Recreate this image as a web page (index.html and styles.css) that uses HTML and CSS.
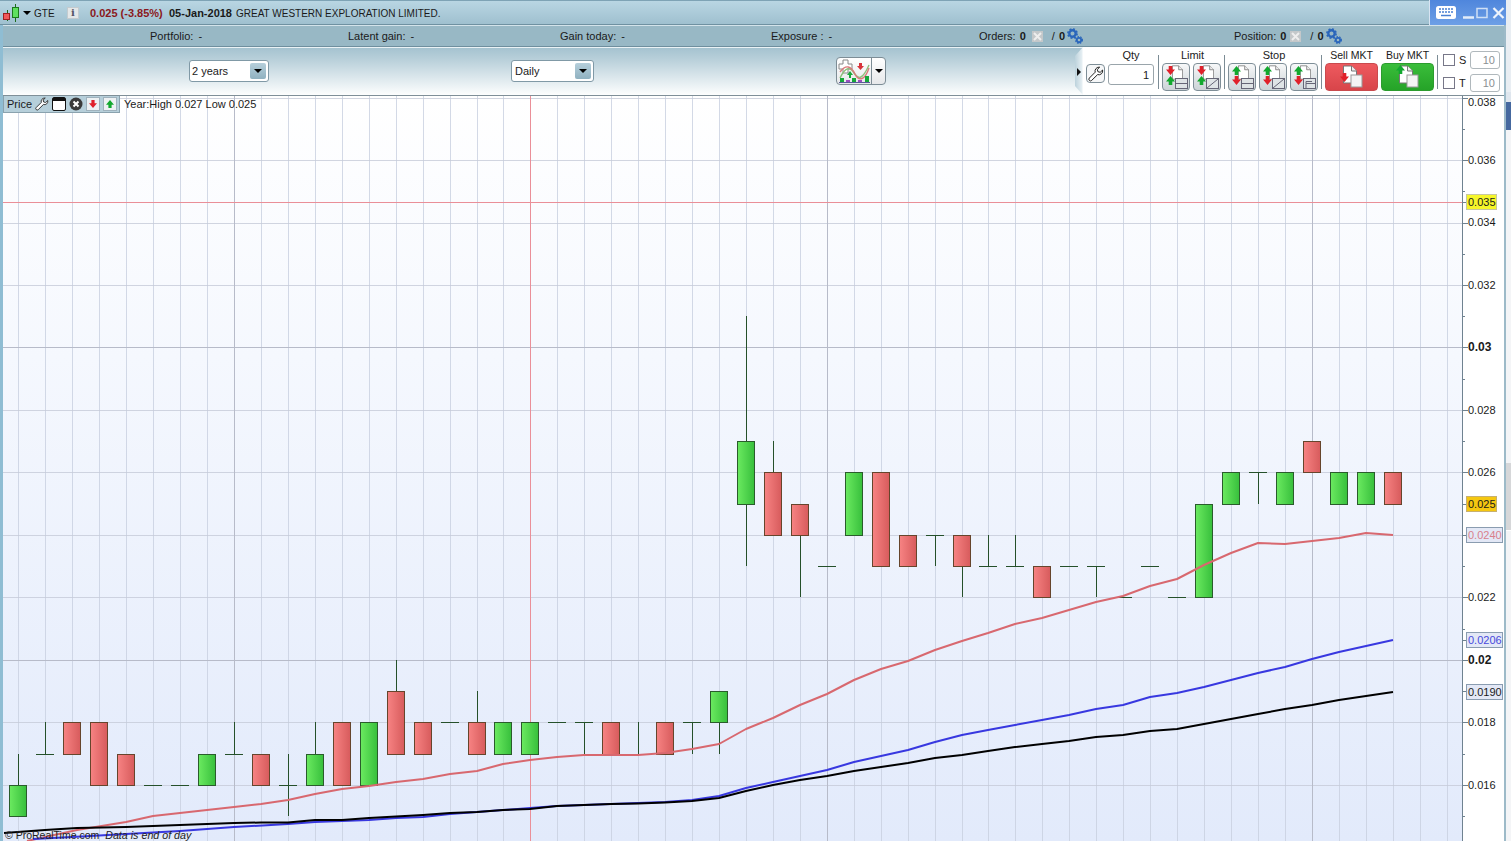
FILE: index.html
```html
<!DOCTYPE html>
<html lang="en">
<head>
<meta charset="utf-8">
<title>GTE</title>
<link rel="stylesheet" href="styles.css">
</head>
<body>
<svg class="defs" width="0" height="0" aria-hidden="true">
  <defs>
    <linearGradient id="gGreen" x1="0" x2="1" y1="0" y2="0"><stop offset="0" stop-color="#6bea60"/><stop offset="1" stop-color="#37bf3c"/></linearGradient>
    <linearGradient id="gRed" x1="0" x2="1" y1="0" y2="0"><stop offset="0" stop-color="#f78383"/><stop offset="1" stop-color="#d75b5c"/></linearGradient>
    <symbol id="aDown" viewBox="0 0 10 10"><path d="M3 0h4v4h3l-5 6-5-6h3z" fill="#e0202a"/></symbol>
    <symbol id="aUp" viewBox="0 0 10 10"><path d="M5 0l5 6h-3v4h-4v-4h-3z" fill="#12a82e"/></symbol>
    <symbol id="paper" viewBox="0 0 14 18"><path d="M.5.5h8l5 5v12h-13z" fill="#fff" stroke="#777"/><path d="M8.500.5v5h5" fill="#eee" stroke="#777"/></symbol>
    <symbol id="gear" viewBox="0 0 16 16">
      <circle cx="5.500" cy="5.500" r="3.200" fill="none" stroke="#2a66bb" stroke-width="2.400"/>
      <circle cx="5.500" cy="5.500" r="4.600" fill="none" stroke="#2a66bb" stroke-width="1.600" stroke-dasharray="2 1.600"/>
      <circle cx="12" cy="12" r="2.200" fill="none" stroke="#2a66bb" stroke-width="1.800"/>
      <circle cx="12" cy="12" r="3.400" fill="none" stroke="#2a66bb" stroke-width="1.200" stroke-dasharray="1.600 1.200"/>
    </symbol>
    <symbol id="wrench" viewBox="0 0 16 16"><path d="M11 1.200a3.900 3.900 0 0 0-3.800 5L1.400 12a1.600 1.600 0 0 0 2.300 2.400l5.900-5.800a3.900 3.900 0 0 0 5-4.600l-2.400 2.300-2.300-.6-.6-2.300 2.400-2.200a3.900 3.900 0 0 0-.7 0z" fill="#fff" stroke="#222" stroke-width="1"/></symbol>
    <symbol id="xmark" viewBox="0 0 11 11"><rect width="11" height="11" fill="#c4c8ca"/><path d="M2 2l7 7M9 2l-7 7" stroke="#eee" stroke-width="2"/></symbol>
  </defs>
</svg>

<div class="screen">
  <div class="window">
    <header class="titlebar">
      <svg class="logo" width="16" height="18" viewBox="0 0 16 18">
        <path d="M12.500 0v18M4.500 6v11" stroke="#1c6b1c"/>
        <rect x="9.500" y="3.500" width="6" height="10" fill="#5fe05f" stroke="#1c7a1c"/>
        <rect x=".5" y="9.500" width="6" height="6" fill="#f05a5a" stroke="#a02020"/>
      </svg>
      <span class="caret caret-title"></span>
      <span class="ticker">GTE</span>
      <span class="info-btn">i</span>
      <span class="price">0.025 (-3.85%)</span>
      <span class="date">05-Jan-2018</span>
      <span class="company">GREAT WESTERN EXPLORATION LIMITED.</span>
      <div class="winctl">
        <svg width="20" height="13" viewBox="0 0 20 13">
          <rect width="20" height="13" rx="2.500" fill="#fff"/>
          <path d="M3 3h2M6 3h2M9 3h2M12 3h2M15 3h2M3 6h2M6 6h2M9 6h2M12 6h2M15 6h2M5 9.500h10" stroke="#4a80d2" stroke-width="1.600"/>
        </svg>
        <svg class="ctl-min" width="11" height="12" viewBox="0 0 11 12"><path d="M0 10.500h11" stroke="#e3edf9" stroke-width="2.500"/></svg>
        <svg class="ctl-max" width="12" height="12" viewBox="0 0 12 12"><rect x="1" y="1.500" width="10" height="9" fill="none" stroke="#cfe0f5" stroke-width="1.500"/></svg>
        <svg class="ctl-close" width="13" height="12" viewBox="0 0 13 12"><path d="M1.500 1l10 10M11.500 1l-10 10" stroke="#eef4fc" stroke-width="2.200"/></svg>
      </div>
    </header>

    <div class="body">
      <div class="statusbar">
        <span class="stat stat-portfolio">Portfolio:<span class="dash">-</span></span>
        <span class="stat stat-latent">Latent gain:<span class="dash">-</span></span>
        <span class="stat stat-gain">Gain today:<span class="dash">-</span></span>
        <span class="stat stat-exposure">Exposure :<span class="dash">-</span></span>
        <span class="stat stat-orders">Orders:<b class="zero">0</b>
          <svg class="ic-x" width="11" height="11"><use href="#xmark"/></svg>
          <span class="slash">/</span><b class="zero-b">0</b><svg class="ic-gear" width="16" height="16"><use href="#gear"/></svg>
        </span>
        <span class="stat stat-position">Position:<b class="zero">0</b>
          <svg class="ic-x" width="11" height="11"><use href="#xmark"/></svg>
          <span class="slash">/</span><b class="zero-b">0</b><svg class="ic-gear" width="16" height="16"><use href="#gear"/></svg>
        </span>
      </div>

      <div class="toolbar">
        <div class="select select-range"><span>2 years</span><span class="select-btn"><span class="caret"></span></span></div>
        <div class="select select-period"><span>Daily</span><span class="select-btn"><span class="caret"></span></span></div>
        <div class="indicator">
          <svg width="34" height="26" viewBox="0 0 34 26">
            <path d="M6 2h5v4h4v5h-4v4H6v-4H2V6h4z" fill="#fff" stroke="#888"/>
            <path d="M3 20C9 8 13 9 17 15s8 8 15-8" fill="none" stroke="#8cc07a" stroke-width="1.400"/>
            <path d="M3 14C9 6 14 8 18 16s10 6 14-6" fill="none" stroke="#d97a7a" stroke-width="1.400"/>
            <path d="M22 5h3v3h2l-3.500 4-3.500-4h2z" fill="#d8323a"/>
            <path d="M13 13l3 4h-2v3h-2v-3h-2z" fill="#1aa83a"/>
            <path d="M3 20h4v4H3zM15 20h4v4h-4zM28 18h4v6h-4z" fill="#16a83a"/>
            <path d="M9 22h4v2H9zM21 22h4v2h-4z" fill="#9b4fc0"/>
            <path d="M2 24.500h31" stroke="#5a5a9a"/>
          </svg>
          <span class="indicator-arrow"><span class="caret"></span></span>
        </div>

        <div class="panel">
          <span class="panel-arrow"></span>
          <button class="tool wrench-btn" type="button"><svg width="16" height="16"><use href="#wrench"/></svg></button>
          <div class="group group-qty">
            <div class="group-label">Qty</div>
            <div class="qty">1</div>
          </div>
          <div class="group group-limit">
            <div class="group-label">Limit</div>
            <div class="btns">
              <button class="tool" type="button">
                <svg width="26" height="26" viewBox="0 0 26 26">
                  <use href="#paper" x="9" y="1" width="11" height="15"/>
                  <use href="#aDown" x="3" y="2" width="9" height="9"/><use href="#aUp" x="3" y="12" width="9" height="9"/>
                  <rect x="12.500" y="14.500" width="12" height="10" fill="#dfe4e6" stroke="#667"/><path d="M12.500 19.500h12" stroke="#667"/>
                </svg>
              </button>
              <button class="tool" type="button">
                <svg width="26" height="26" viewBox="0 0 26 26">
                  <use href="#paper" x="9" y="1" width="11" height="15"/>
                  <use href="#aDown" x="3" y="2" width="9" height="9"/><use href="#aUp" x="3" y="12" width="9" height="9"/>
                  <rect x="12.500" y="14.500" width="12" height="10" fill="#dfe4e6" stroke="#667"/><path d="M13 24l11-9" stroke="#667"/>
                </svg>
              </button>
            </div>
          </div>
          <div class="group group-stop">
            <div class="group-label">Stop</div>
            <div class="btns">
              <button class="tool" type="button">
                <svg width="26" height="26" viewBox="0 0 26 26">
                  <use href="#paper" x="9" y="1" width="11" height="15"/>
                  <use href="#aUp" x="3" y="2" width="9" height="9"/><use href="#aDown" x="3" y="12" width="9" height="9"/>
                  <rect x="12.500" y="14.500" width="12" height="10" fill="#dfe4e6" stroke="#667"/><path d="M12.500 19.500h12" stroke="#667"/>
                </svg>
              </button>
              <button class="tool" type="button">
                <svg width="26" height="26" viewBox="0 0 26 26">
                  <use href="#paper" x="9" y="1" width="11" height="15"/>
                  <use href="#aUp" x="3" y="2" width="9" height="9"/><use href="#aDown" x="3" y="12" width="9" height="9"/>
                  <rect x="12.500" y="14.500" width="12" height="10" fill="#dfe4e6" stroke="#667"/><path d="M13 24l11-9" stroke="#667"/>
                </svg>
              </button>
              <button class="tool" type="button">
                <svg width="26" height="26" viewBox="0 0 26 26">
                  <use href="#paper" x="9" y="1" width="11" height="15"/>
                  <use href="#aUp" x="3" y="2" width="9" height="9"/><use href="#aDown" x="3" y="12" width="9" height="9"/>
                  <rect x="12.500" y="14.500" width="12" height="10" fill="#dfe4e6" stroke="#667"/><path d="M15 24.500v-5h9" fill="none" stroke="#667"/><path d="M15 19.500v-2h6" fill="none" stroke="#667"/>
                </svg>
              </button>
            </div>
          </div>
          <div class="group group-mkt">
            <div class="group-label">Sell MKT</div>
            <button class="mkt mkt-sell" type="button">
              <svg width="26" height="26" viewBox="0 0 26 26">
                <use href="#paper" x="4" y="1" width="14" height="19"/>
                <use href="#aDown" x="1" y="9" width="9" height="9"/>
                <rect x="12" y="11" width="11" height="12" fill="#f4f4f4" stroke="#999"/>
              </svg>
            </button>
          </div>
          <div class="group group-mkt group-buy">
            <div class="group-label">Buy MKT</div>
            <button class="mkt mkt-buy" type="button">
              <svg width="26" height="26" viewBox="0 0 26 26">
                <use href="#paper" x="4" y="1" width="14" height="19"/>
                <use href="#aUp" x="1" y="1" width="9" height="9"/>
                <rect x="12" y="11" width="11" height="12" fill="#f4f4f4" stroke="#999"/>
              </svg>
            </button>
          </div>
          <div class="group-st">
            <label class="st-row"><span class="check"></span><span class="st-name">S</span><span class="st-val">10</span></label>
            <label class="st-row"><span class="check"></span><span class="st-name">T</span><span class="st-val">10</span></label>
          </div>
        </div>
      </div>

      <div class="chart">
        <svg class="plot" width="1501" height="745" viewBox="3 96 1501 745">
          <rect class="axis-bg" x="1462" y="96" width="42" height="745"/>
          <path class="grid-v" d="M18.500 96V841M45.500 96V841M72.500 96V841M99.500 96V841M126.500 96V841M153.500 96V841M180.500 96V841M207.500 96V841M261.500 96V841M288.500 96V841M315.500 96V841M342.500 96V841M369.500 96V841M396.500 96V841M423.500 96V841M450.500 96V841M477.500 96V841M503.500 96V841M557.500 96V841M584.500 96V841M611.500 96V841M638.500 96V841M665.500 96V841M692.500 96V841M719.500 96V841M746.500 96V841M773.500 96V841M800.500 96V841M854.500 96V841M881.500 96V841M908.500 96V841M935.500 96V841M962.500 96V841M988.500 96V841M1015.500 96V841M1042.500 96V841M1069.500 96V841M1096.500 96V841M1123.500 96V841M1150.500 96V841M1177.500 96V841M1204.500 96V841M1231.500 96V841M1258.500 96V841M1285.500 96V841M1339.500 96V841M1366.500 96V841M1393.500 96V841M1420.500 96V841M1447.500 96V841"/>
          <path class="grid-h" d="M3 98.500H1462M3 160.500H1462M3 223.500H1462M3 285.500H1462M3 410.500H1462M3 472.500H1462M3 535.500H1462M3 597.500H1462M3 722.500H1462M3 785.500H1462"/>
          <path class="grid-major" d="M234.500 96V841M827.500 96V841M1312.500 96V841M3 347.500H1462M3 660.500H1462"/>
          <path class="cursor" d="M530.500 96V841M3 202.500H1462"/>

          <path class="wick" d="M18.500 754V785M45.500 722V754M234.500 722V754M288.500 754V816M315.500 722V754M396.500 660V691M477.500 691V722M584.500 722V754M638.500 722V754M692.500 722V754M719.500 722V754M746.500 316V441M746.500 504V566M773.500 441V472M800.500 535V597M935.500 535V566M962.500 566V597M988.500 535V566M1015.500 535V566M1096.500 566V597M1258.500 472V504"/>
          <path class="wick" d="M36 754.500H54M144 785.500H162M171 785.500H189M225 754.500H243M279 785.500H297M441 722.500H459M548 722.500H566M575 722.500H593M683 722.500H701M818 566.500H836M926 535.500H944M979 566.500H997M1006 566.500H1024M1060 566.500H1078M1087 566.500H1105M1114 597.500H1132M1141 566.500H1159M1168 597.500H1186M1249 472.500H1267"/>

          <g class="body-green" fill="url(#gGreen)">
            <rect x="9.500" y="785.500" width="17" height="31"/>
            <rect x="198.500" y="754.500" width="17" height="31"/>
            <rect x="306.500" y="754.500" width="17" height="31"/>
            <rect x="360.500" y="722.500" width="17" height="63"/>
            <rect x="494.500" y="722.500" width="17" height="32"/>
            <rect x="521.500" y="722.500" width="17" height="32"/>
            <rect x="710.500" y="691.500" width="17" height="31"/>
            <rect x="737.500" y="441.500" width="17" height="63"/>
            <rect x="845.500" y="472.500" width="17" height="63"/>
            <rect x="1195.500" y="504.500" width="17" height="93"/>
            <rect x="1222.500" y="472.500" width="17" height="32"/>
            <rect x="1276.500" y="472.500" width="17" height="32"/>
            <rect x="1330.500" y="472.500" width="17" height="32"/>
            <rect x="1357.500" y="472.500" width="17" height="32"/>
          </g>
          <g class="body-red" fill="url(#gRed)">
            <rect x="63.500" y="722.500" width="17" height="32"/>
            <rect x="90.500" y="722.500" width="17" height="63"/>
            <rect x="117.500" y="754.500" width="17" height="31"/>
            <rect x="252.500" y="754.500" width="17" height="31"/>
            <rect x="333.500" y="722.500" width="17" height="63"/>
            <rect x="387.500" y="691.500" width="17" height="63"/>
            <rect x="414.500" y="722.500" width="17" height="32"/>
            <rect x="468.500" y="722.500" width="17" height="32"/>
            <rect x="602.500" y="722.500" width="17" height="32"/>
            <rect x="656.500" y="722.500" width="17" height="32"/>
            <rect x="764.500" y="472.500" width="17" height="63"/>
            <rect x="791.500" y="504.500" width="17" height="31"/>
            <rect x="872.500" y="472.500" width="17" height="94"/>
            <rect x="899.500" y="535.500" width="17" height="31"/>
            <rect x="953.500" y="535.500" width="17" height="31"/>
            <rect x="1033.500" y="566.500" width="17" height="31"/>
            <rect x="1303.500" y="441.500" width="17" height="31"/>
            <rect x="1384.500" y="472.500" width="17" height="32"/>
          </g>

          <polyline class="ma ma-red" points="27,841 77,830 126,822 153,816 180,813 207,810 234,807 261,804 288,800 315,794 342,789 369,786 396,782 423,779 450,774 477,771 503,764 530,760 557,757 584,755 611,755 638,755 665,753 692,749 719,744 746,729 773,718 800,705 827,694 854,680 881,669 908,661 935,650 962,641 988,633 1015,624 1042,618 1069,610 1096,602 1123,596 1150,586 1177,579 1204,565 1231,553 1258,543 1285,544 1312,541 1339,538 1366,533 1393,535"/>
          <polyline class="ma ma-blue" points="33,839 72,837 126,834 180,831 234,827 288,824 315,822 342,821 369,820 396,818 423,817 450,814 477,812 503,810 530,808 557,806 584,805 611,804 638,803 665,802 692,800 719,796 746,788 773,782 800,776 827,770 854,762 881,756 908,750 935,742 962,735 988,730 1015,725 1042,720 1069,715 1096,709 1123,705 1150,697 1177,693 1204,687 1231,680 1258,673 1285,667 1312,659 1339,652 1366,646 1393,640"/>
          <polyline class="ma ma-black" points="4,833 45,830 77,828 126,827 180,825 234,823 261,822.500 288,822.500 315,820 342,820 369,818 396,816.500 423,815 450,813 477,812 503,810 530,809 557,806 584,805 611,804 638,803.500 665,802.500 692,801 719,798 746,791 773,785 800,780 827,776 854,771 881,767 908,763 935,758 962,755 988,751 1015,747 1042,744 1069,741 1096,737 1123,735 1150,731 1177,729 1204,724 1231,719 1258,714 1285,709 1312,705 1339,700 1366,696 1393,692"/>

          <path class="axis-line" d="M1462.500 96V841"/>
          <path class="axis-line" d="M1462 98.500h6M1462 129.500h3M1462 160.500h6M1462 191.500h3M1462 223.500h6M1462 254.500h3M1462 285.500h6M1462 316.500h3M1462 347.500h6M1462 379.500h3M1462 410.500h6M1462 441.500h3M1462 472.500h6M1462 504.500h6M1462 535.500h6M1462 566.500h3M1462 597.500h6M1462 629.500h3M1462 640.500h6M1462 660.500h6M1462 691.500h6M1462 722.500h6M1462 754.500h3M1462 785.500h6M1462 816.500h3M1462 202.500h6"/>
          <g class="axis-text">
            <text x="1468" y="106">0.038</text>
            <text x="1468" y="164">0.036</text>
            <text x="1468" y="226">0.034</text>
            <text x="1468" y="289">0.032</text>
            <text class="axis-bold" x="1468" y="351">0.03</text>
            <text x="1468" y="414">0.028</text>
            <text x="1468" y="476">0.026</text>
            <text x="1468" y="601">0.022</text>
            <text class="axis-bold" x="1468" y="664">0.02</text>
            <text x="1468" y="726">0.018</text>
            <text x="1468" y="789">0.016</text>
          </g>
          <rect class="tag tag-yellow" x="1466.500" y="194.500" width="30" height="15"/>
          <text class="axis-text" x="1468" y="206">0.035</text>
          <rect class="tag tag-gold" x="1466.500" y="496.500" width="30" height="15"/>
          <text class="axis-text" x="1468" y="508">0.025</text>
          <rect class="tag tag-ma" x="1466.500" y="527.500" width="36" height="15"/>
          <text class="axis-text text-pink" x="1468" y="539">0.0240</text>
          <rect class="tag tag-ma" x="1466.500" y="632.500" width="36" height="15"/>
          <text class="axis-text text-blue" x="1468" y="644">0.0206</text>
          <rect class="tag tag-ma" x="1466.500" y="684.500" width="36" height="15"/>
          <text class="axis-text" x="1468" y="696">0.0190</text>
        </svg>

        <div class="legend">
          <div class="legend-tools">
            <span>Price</span>
            <svg class="lg-ic" width="14" height="14"><use href="#wrench"/></svg>
            <svg class="lg-ic" width="14" height="14" viewBox="0 0 14 14"><rect x=".5" y=".5" width="13" height="13" rx="1.500" fill="#fff" stroke="#111"/><rect x="1" y="1" width="12" height="3" fill="#111"/></svg>
            <svg class="lg-ic" width="14" height="14" viewBox="0 0 14 14"><circle cx="7" cy="7" r="6.500" fill="#3a3a3a"/><path d="M4.500 4.500l5 5M9.500 4.500l-5 5" stroke="#fff" stroke-width="2"/></svg>
            <svg class="lg-ic" width="14" height="14" viewBox="0 0 14 14"><rect x=".5" y=".5" width="13" height="13" fill="#edf1f3" stroke="#9fb2bd"/><use href="#aDown" x="3" y="3" width="8" height="8"/></svg>
            <svg class="lg-ic" width="14" height="14" viewBox="0 0 14 14"><rect x=".5" y=".5" width="13" height="13" fill="#edf1f3" stroke="#9fb2bd"/><use href="#aUp" x="3" y="3" width="8" height="8"/></svg>
          </div>
          <span class="legend-text">Year:High 0.027 Low 0.025</span>
        </div>
        <div class="copyright">© ProRealTime.com <i class="copy-note">Data is end of day</i></div>
      </div>
    </div>
  </div>
  <div class="behind">
    <div class="behind-top"></div>
    <div class="behind-tab"></div>
    <div class="behind-dark"></div>
    <div class="behind-gap"></div>
    <div class="behind-block"></div>
    <div class="behind-low"></div>
  </div>
</div>
</body>
</html>
```

FILE: styles.css
```css
* { box-sizing: border-box; }
html, body { margin: 0; padding: 0; width: 1511px; height: 841px; overflow: hidden; }
body { font: 11px "Liberation Sans", Arial, sans-serif; color: #1a1a1a; background: #eef1f4; }
.defs { position: absolute; }

.screen { display: flex; width: 1511px; height: 841px; }
.window { width: 1506px; height: 841px; display: flex; flex-direction: column; flex: none; }

/* title bar */
.titlebar {
  height: 25px; flex: none; display: flex; align-items: center; position: relative;
  padding-left: 3px;
  background: linear-gradient(#b9d6e3, #9fc0cf);
  border-top: 1px solid #7ea3b5;
  border-bottom: 1px solid #6f91a1;
  font-size: 11px;
}
.logo { flex: none; }
.caret { display: inline-block; width: 0; height: 0; border-left: 4px solid transparent; border-right: 4px solid transparent; border-top: 4px solid #000; }
.caret-title { margin-left: 4px; }
.ticker { margin: 1px 0 0 3px; width: 33px; font-size: 10px; }
.info-btn { width: 12px; height: 12px; background: #e4e7e8; border: 1px solid #c3cbcf; text-align: center; line-height: 10px; font-size: 10px; font-weight: bold; color: #556; font-family: "DejaVu Serif", serif; }
.price { margin-left: 11px; width: 79px; font-weight: bold; color: #8a1820; white-space: nowrap; }
.date { font-weight: bold; width: 67px; white-space: nowrap; }
.company { white-space: nowrap; font-size: 10px; margin-top: 1px; }
.winctl {
  margin-left: auto; width: 77px; height: 25px; display: flex; align-items: center;
  padding-left: 6px; margin-top: -1px; margin-bottom: -1px;
  background: linear-gradient(#4f86dc, #6d9fe6);
  border-left: 1px solid #d8e4f2;
}
.ctl-min { margin-left: 7px; }
.ctl-max { margin-left: 2px; }
.ctl-close { margin-left: 4px; }

.body { flex: 1; display: flex; flex-direction: column; min-height: 0; border-left: 3px solid #8fbdd3; border-right: 2px solid #9dbac8; }

/* status row */
.statusbar {
  height: 22px; flex: none; display: flex; align-items: center; padding-left: 147px;
  background: #98b8c5;
  border-top: 1px solid #d3e3ea;
  border-bottom: 1px solid #6f8f9e;
}
.stat { white-space: nowrap; display: flex; align-items: center; }
.stat-portfolio { width: 198px; }
.stat-latent { width: 212px; }
.stat-gain { width: 211px; }
.stat-exposure { width: 208px; }
.stat-orders { width: 255px; }
.stat b { font-weight: bold; }
.dash { margin-left: 5px; }
.zero { margin-left: 4px; }
.zero-b { margin-left: 4px; }
.ic-x { margin-left: 6px; }
.stat-position .ic-x { margin-left: 4px; }
.slash { margin-left: 9px; }
.ic-gear { margin-left: 2px; }

/* toolbar */
.toolbar {
  height: 49px; flex: none; display: flex; align-items: flex-start; padding-left: 186px;
  background: linear-gradient(#a5c3d0, #b9d0da 25%, #fdfefe);
  border-bottom: 1px solid #7f8f98;
  border-top: 1px solid #eaf2f5;
}
.select {
  margin-top: 12px; height: 22px; background: #fff; border: 1px solid #8099a6; border-radius: 3px;
  display: flex; align-items: center; justify-content: space-between; padding: 0 2px 0 2px; font-size: 11px;
}
.select-range { width: 80px; }
.select-period { width: 83px; margin-left: 242px; padding-left: 3px; }
.select-btn { width: 16px; height: 16px; border-radius: 2px; background: linear-gradient(#b6cfdb, #8fb1c0); display: flex; align-items: center; justify-content: center; }
.indicator {
  margin-left: 242px; margin-top: 9px; width: 50px; height: 28px; display: flex;
  background: linear-gradient(#fff, #e6e8ea); border: 1px solid #7d8d96; border-radius: 4px;
}
.indicator svg { width: 34px; height: 26px; flex: none; }
.indicator-arrow { flex: 1; border-left: 1px solid #7d8d96; display: flex; align-items: center; justify-content: center; }

/* trading panel */
.panel {
  margin-left: auto; width: 429px; height: 48px; display: flex; align-items: flex-start; position: relative;
  background: linear-gradient(90deg, #bcd2dc 0, #e6eff3 7px, #fff 8px);
  clip-path: polygon(8px 0, 100% 0, 100% 100%, 8px 100%, 0 calc(100% - 9px), 0 9px);
  margin-top: -1px; padding-left: 11px;
}
.panel-arrow { position: absolute; left: 2px; top: 21px; width: 0; height: 0; border-top: 4px solid transparent; border-bottom: 4px solid transparent; border-left: 4px solid #111; }
.tool {
  width: 28px; height: 28px; padding: 0; margin: 0; display: flex; align-items: center; justify-content: center; flex: none;
  border: 1px solid #7e8e97; border-radius: 4px; background: linear-gradient(#f7f8f9, #ccd3d7);
}
.wrench-btn { width: 19px; height: 19px; margin-top: 17px; background: #f6f7f8; }
.group-label { height: 16px; text-align: center; line-height: 16px; font-size: 11px; white-space: nowrap; }
.group-qty { width: 46px; margin-left: 3px; }
.qty { height: 21px; border: 1px solid #9aa5ab; border-radius: 3px; text-align: right; line-height: 20px; padding-right: 4px; margin-top: 1px; }
.btns { display: flex; gap: 3px; }
.group-limit, .group-stop, .group-mkt, .group-st { border-left: 1px solid #7c8c95; height: 34px; margin-top: 8px; margin-left: 3px; padding-left: 3px; }
.group-limit { margin-left: 4px; }
.group-limit .group-label, .group-stop .group-label, .group-mkt .group-label { margin-top: -8px; }
.group-limit .group-label, .group-stop .group-label { padding-left: 2px; }
.group-mkt .group-label { font-size: 10.500px; }
.group-buy { border-left: 0; padding-left: 0; }
.mkt { width: 53px; height: 28px; padding: 0; display: flex; align-items: center; justify-content: center; border-radius: 4px; }
.mkt-sell { background: linear-gradient(#ee5a5f, #d8454a); border: 1px solid #c94a4e; }
.mkt-buy { background: linear-gradient(#3abd3a, #25a328); border: 1px solid #2b9c2e; }
.group-st { padding-left: 5px; width: 67px; display: flex; flex-direction: column; }
.st-row { display: flex; align-items: center; height: 18px; margin-top: -4px; margin-bottom: 9px; }
.check { width: 12px; height: 12px; border: 1px solid #778; background: #fff; flex: none; }
.st-name { margin-left: 4px; width: 11px; }
.st-val { width: 30px; height: 18px; border: 1px solid #b0b8bc; border-radius: 3px; text-align: right; line-height: 16px; padding-right: 4px; color: #8a8f92; }

/* chart */
.chart { position: relative; flex: 1; min-height: 0; overflow: hidden; background: linear-gradient(#fff, #f5f8fe 35%, #e2eafb); }
.plot { display: block; }
.axis-bg { fill: #fff; }
.grid-v { stroke: #c8cfe0; stroke-width: 1; fill: none; opacity: .8; }
.grid-h { stroke: #c6cbd8; stroke-width: 1; fill: none; opacity: .8; }
.grid-major { stroke: #b7bbc9; stroke-width: 1; fill: none; }
.cursor { stroke: #ea8f98; stroke-width: 1; fill: none; }
.wick { stroke: #25502a; stroke-width: 1; fill: none; }
.body-green rect { stroke: #2a5c2c; stroke-width: 1; }
.body-red rect { stroke: #66452c; stroke-width: 1; }
.ma { fill: none; stroke-width: 2; stroke-linejoin: round; }
.ma-red { stroke: #d8686f; }
.ma-blue { stroke: #3838e0; }
.ma-black { stroke: #000; }
.axis-line { stroke: #6f8290; stroke-width: 1; fill: none; }
.axis-text { font: 11px "Liberation Sans", Arial, sans-serif; fill: #1a1a1a; }
.axis-bold { font-weight: bold; font-size: 12px; }
.tag { stroke-width: 1; }
.tag-yellow { fill: #f6f62a; stroke: #c7c7a0; }
.tag-gold { fill: #f5c710; stroke: #c7b070; }
.tag-ma { fill: #e3e8f6; stroke: #8a9cb0; }
.text-pink { fill: #d9808c; }
.text-blue { fill: #4848dc; }

.legend { position: absolute; left: 0; top: 0; height: 17px; display: flex; align-items: center; }
.legend-tools {
  width: 117px; height: 17px; display: flex; align-items: center; padding-left: 3px;
  background: #b6cfda; border: 1px solid #8aa2ae; border-top: 0;
}
.lg-ic { margin-left: 3px; flex: none; }
.legend-text { margin: -2px 0 0 4px; white-space: nowrap; }
.copyright { position: absolute; left: 2px; bottom: -1px; line-height: 14px; white-space: nowrap; color: #222; font-size: 10.500px; }
.copy-note { margin-left: 3px; font-size: 10.700px; }

/* window behind, visible at the far right */
.behind { flex: 1; display: flex; flex-direction: column; background: #f0f2f5; overflow: hidden; }
.behind-top { height: 92px; background: #e9eef3; flex: none; }
.behind-tab { height: 10px; background: #dfe6ee; flex: none; }
.behind-dark { height: 28px; background: #45689f; flex: none; }
.behind-gap { height: 333px; background: #f4f5f7; flex: none; }
.behind-block { height: 67px; background: #d6d7d9; flex: none; }
.behind-low { flex: 1; background: #f4f5f7; border-top: 1px solid #fff; }
```
